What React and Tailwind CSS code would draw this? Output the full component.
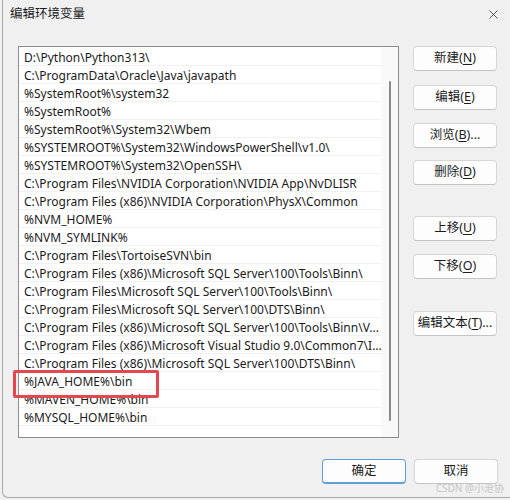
import { X } from 'lucide-react';

const PATHS = [
  'D:\\Python\\Python313\\',
  'C:\\ProgramData\\Oracle\\Java\\javapath',
  '%SystemRoot%\\system32',
  '%SystemRoot%',
  '%SystemRoot%\\System32\\Wbem',
  '%SYSTEMROOT%\\System32\\WindowsPowerShell\\v1.0\\',
  '%SYSTEMROOT%\\System32\\OpenSSH\\',
  'C:\\Program Files\\NVIDIA Corporation\\NVIDIA App\\NvDLISR',
  'C:\\Program Files (x86)\\NVIDIA Corporation\\PhysX\\Common',
  '%NVM_HOME%',
  '%NVM_SYMLINK%',
  'C:\\Program Files\\TortoiseSVN\\bin',
  'C:\\Program Files (x86)\\Microsoft SQL Server\\100\\Tools\\Binn\\',
  'C:\\Program Files\\Microsoft SQL Server\\100\\Tools\\Binn\\',
  'C:\\Program Files\\Microsoft SQL Server\\100\\DTS\\Binn\\',
  'C:\\Program Files (x86)\\Microsoft SQL Server\\100\\Tools\\Binn\\V...',
  'C:\\Program Files (x86)\\Microsoft Visual Studio 9.0\\Common7\\I...',
  'C:\\Program Files (x86)\\Microsoft SQL Server\\100\\DTS\\Binn\\',
  '%JAVA_HOME%\\bin',
  '%MAVEN_HOME%\\bin',
  '%MYSQL_HOME%\\bin',
];

function DlgButton({ label, hotkey, suffix = '', primary = false, className = '' }) {
  return (
    <button
      className={
        'h-[25px] w-[84px] rounded-[4px] text-[12.5px] text-[#1b1b1b] flex items-center justify-center ' +
        (primary
          ? 'bg-[#fdfdfd] border border-[#5e9fd8] border-b-2 '
          : 'bg-[#fdfdfd] border border-[#d6d6d6] border-b-[#c4c4c4] ') +
        className
      }
    >
      <span>{label}</span>
      {hotkey && (
        <span>
          (<span className="underline underline-offset-2">{hotkey}</span>){suffix}
        </span>
      )}
    </button>
  );
}

export default function App() {
  return (
    <div
      className="w-[510px] h-[500px] bg-[#f0f0f0] overflow-hidden"
      style={{ fontFamily: '"Noto Sans", "Noto Sans CJK SC", sans-serif' }}
    >
      <div className="relative ml-[2px] h-[498px] border-l border-b border-[#a8a8a8] rounded-bl-[6px] bg-[#f0f0f0]">
        {/* title bar */}
        <div className="flex items-center justify-between h-[28px] pl-[7px] pr-[9px]">
          <span className="text-[12.5px] text-[#1b1b1b] pt-[1px]">编辑环境变量</span>
          <X size={15} strokeWidth={1.2} className="text-[#222]" />
        </div>

        <div className="flex pl-[15px] pt-[18px]">
          {/* path list */}
          <div className="relative w-[381px] h-[392px] border border-[#8c8c8c] bg-white flex">
            <div className="w-[362px] pt-px">
              {PATHS.map((p) => (
                <div
                  key={p}
                  className="h-[18px] border-b border-[#f1f1f1] pl-[5px] pt-[2px] flex items-center text-[12px] text-[#1b1b1b] whitespace-nowrap overflow-hidden"
                >
                  {p}
                </div>
              ))}
            </div>
            {/* scrollbar */}
            <div className="flex-1 bg-[#f9f9f9] flex justify-center pt-[34px]">
              <div className="w-[2px] h-[340px] bg-[#8a8a8a] rounded-full" />
            </div>

            {/* highlighted entry */}
            <div className="absolute left-[-6px] top-[323px] w-[146px] h-[28px] border-[3px] border-[#e5474f] rounded-[2px]" />
          </div>

          {/* side buttons */}
          <div className="flex flex-col pl-[14px] pt-0">
            <DlgButton label="新建" hotkey="N" />
            <DlgButton label="编辑" hotkey="E" className="mt-[14px]" />
            <DlgButton label="浏览" hotkey="B" suffix="..." className="mt-[13px]" />
            <DlgButton label="删除" hotkey="D" className="mt-[12px]" />
            <DlgButton label="上移" hotkey="U" className="mt-[31px]" />
            <DlgButton label="下移" hotkey="O" className="mt-[13px]" />
            <DlgButton label="编辑文本" hotkey="T" suffix="..." className="mt-[32px]" />
          </div>
        </div>

        {/* dialog footer */}
        <div className="flex justify-end gap-[8px] pr-[12px] pt-[21px]">
          <DlgButton label="确定" primary />
          <DlgButton label="取消" />
        </div>

        <div className="absolute right-[6px] bottom-[3px] text-[10px] leading-[12px] text-[#c6c6c6]">CSDN @小沧协</div>
      </div>
    </div>
  );
}
